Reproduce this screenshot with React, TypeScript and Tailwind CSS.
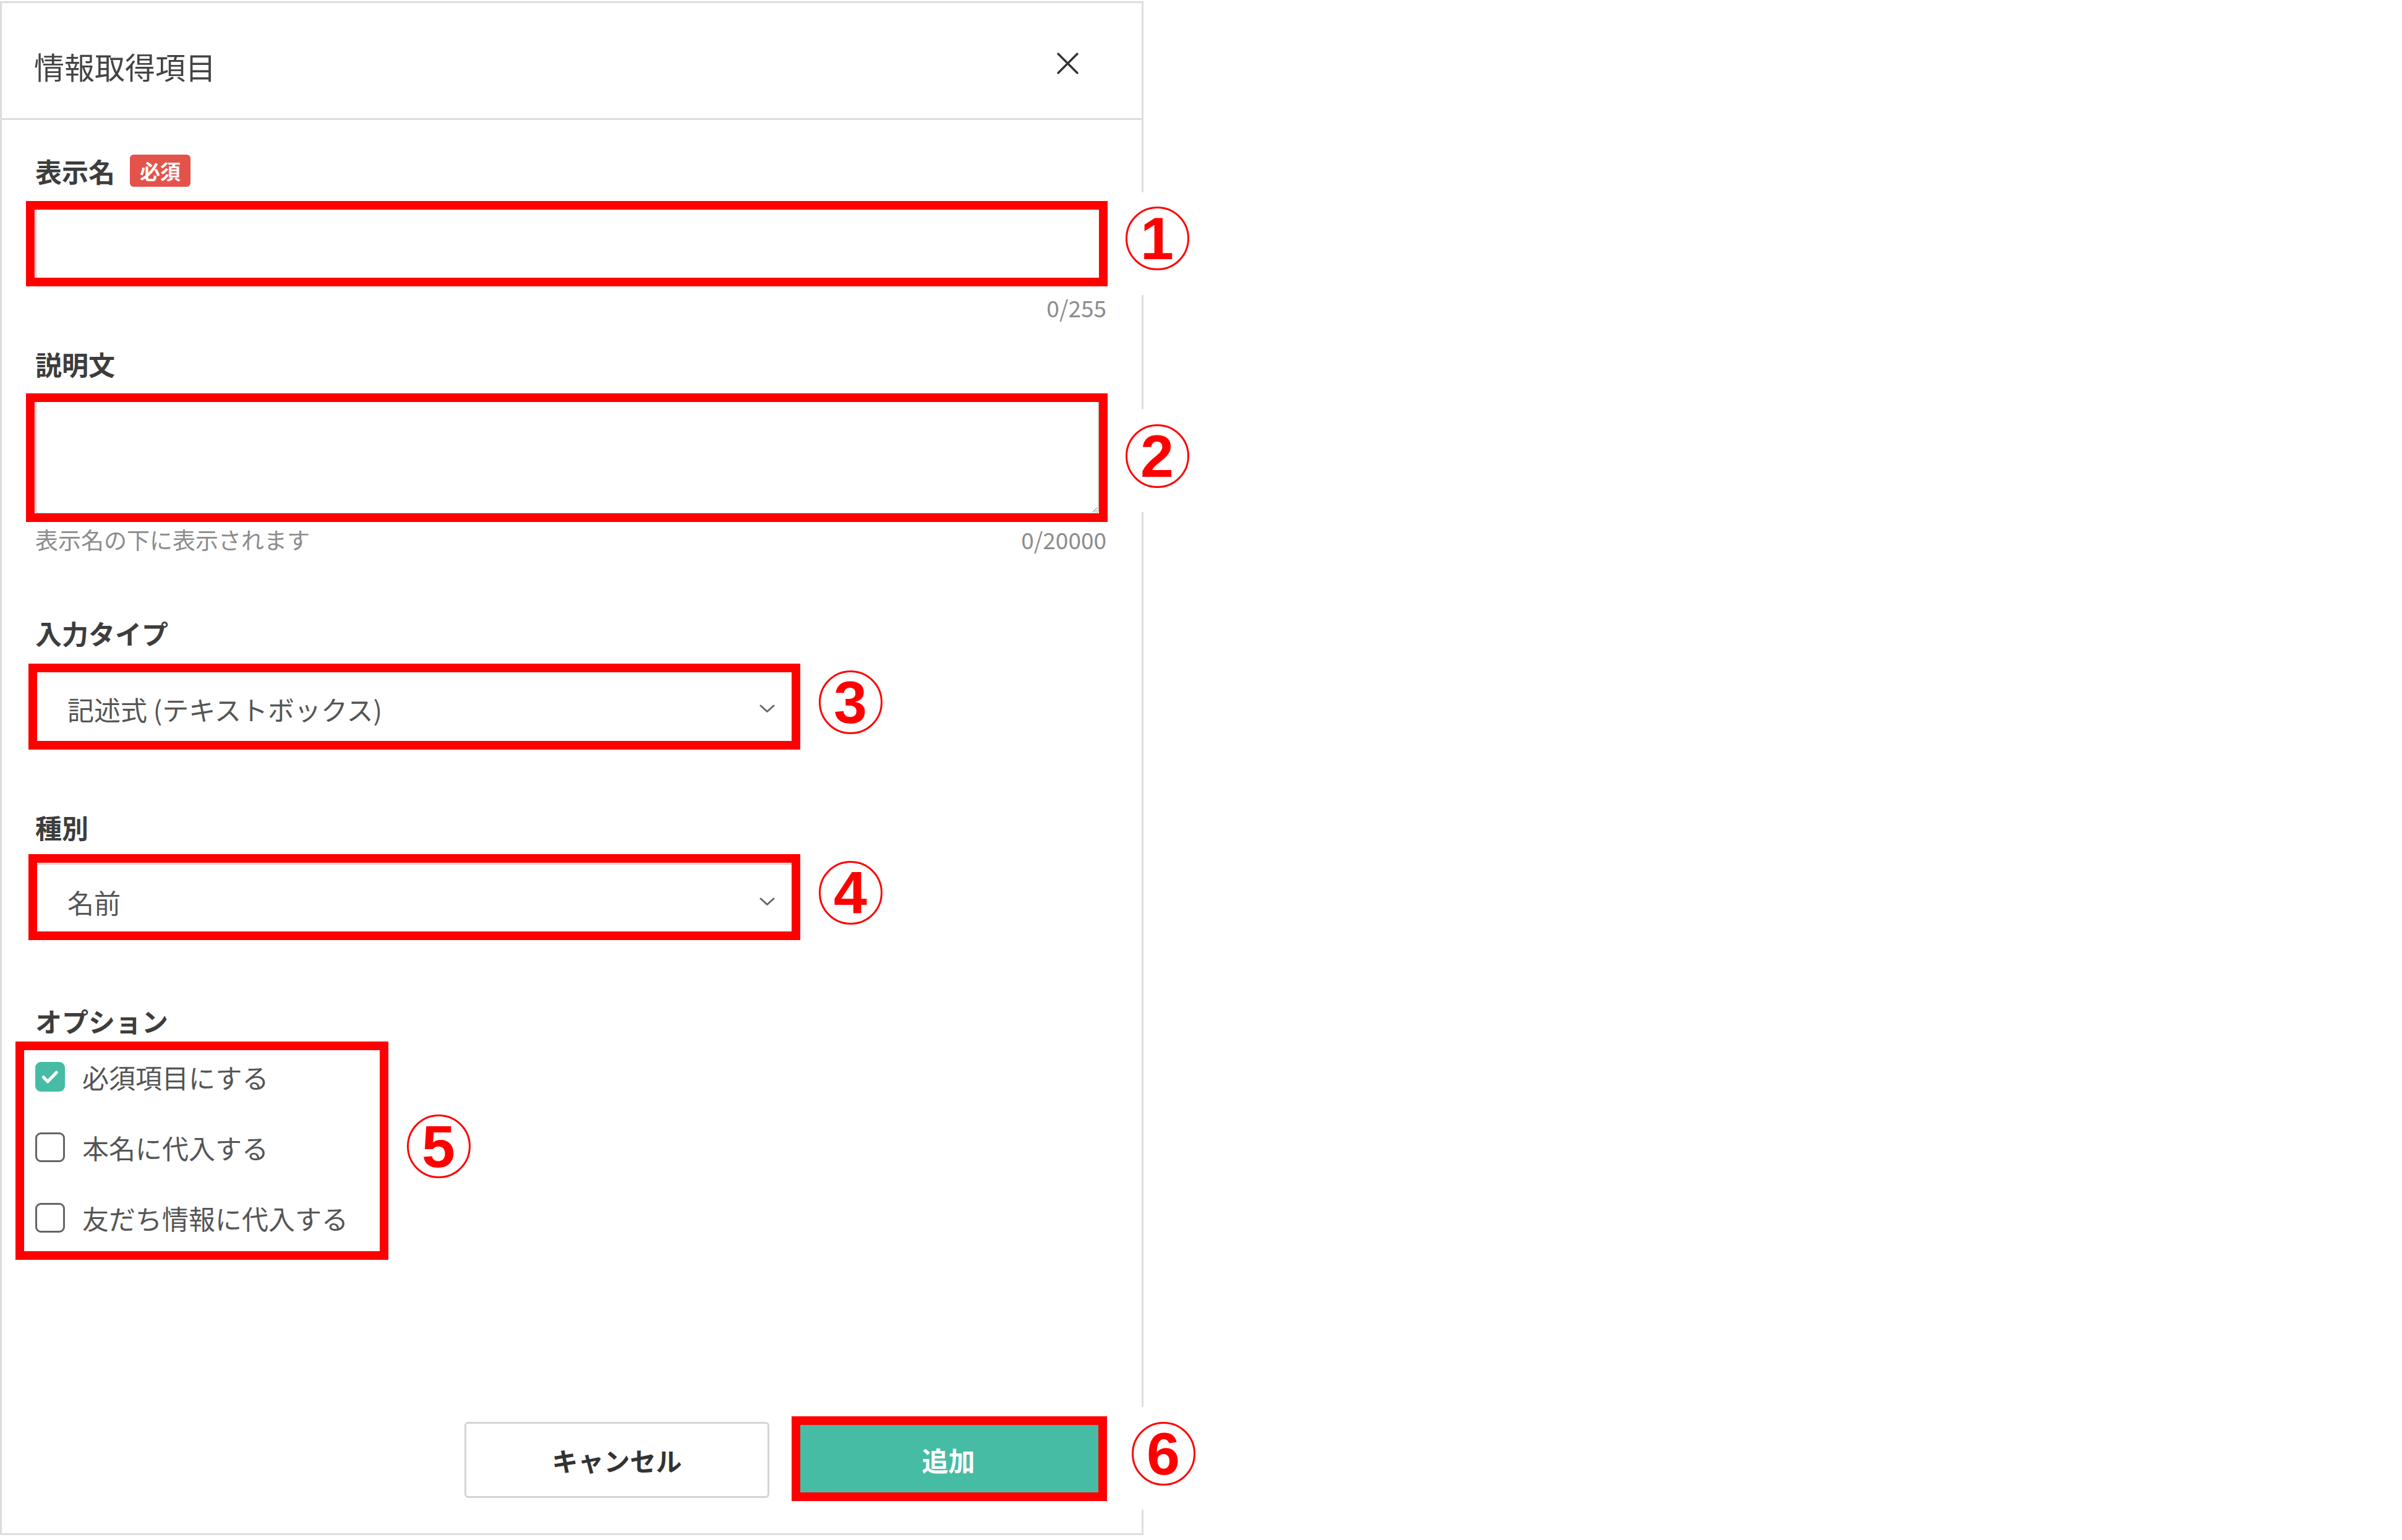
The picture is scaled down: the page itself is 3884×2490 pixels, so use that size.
import React from "react";

function Frame({ className }: { className: string }) {
  return (
    <div
      className={
        "pointer-events-none absolute border-[14px] border-[#ff0000] " + className
      }
    />
  );
}

interface MarkerProps {
  n: string;
  className: string;
  circle: string;
}

// circled step number, sits on a white patch that hides the panel edge
function Marker({ n, className, circle }: MarkerProps) {
  return (
    <div
      className={
        "pointer-events-none absolute flex h-[166px] w-[142px] items-center justify-center bg-white " +
        className
      }
    >
      <div
        className={
          "flex h-[103px] w-[103px] items-center justify-center rounded-full border-[3px] border-[#ff0000] " +
          circle
        }
      >
        <span className="font-['Liberation_Sans',sans-serif] text-[97px] font-bold leading-none text-[#ff0000]">
          {n}
        </span>
      </div>
    </div>
  );
}

function Chevron() {
  return (
    <svg width="25" height="14" viewBox="0 0 25 14" fill="none">
      <polyline
        points="2,2 12.5,11.5 23,2"
        stroke="#666"
        strokeWidth="3"
        strokeLinecap="round"
        strokeLinejoin="round"
      />
    </svg>
  );
}

function Label({ children }: { children: React.ReactNode }) {
  return (
    <span className="text-[43px] font-bold leading-[60px] text-[#3d3d3d]">{children}</span>
  );
}

function Check({ checked, label }: { checked?: boolean; label: string }) {
  return (
    <div className="flex h-[60px] items-center">
      {checked ? (
        <span className="flex h-[48px] w-[48px] items-center justify-center rounded-[9px] bg-[#46bca4]">
          <svg width="34" height="34" viewBox="0 0 24 24" fill="none">
            <path
              d="M4.5 12.5l4.8 5 10-10.5"
              stroke="#fff"
              strokeWidth="3.6"
              strokeLinecap="round"
              strokeLinejoin="round"
            />
          </svg>
        </span>
      ) : (
        <span className="h-[48px] w-[48px] rounded-[9px] border-[3px] border-[#646464] bg-white" />
      )}
      <span className="ml-[28px] text-[43px] leading-[60px] text-[#555]">{label}</span>
    </div>
  );
}

export default function App() {
  return (
    <div className="min-h-screen w-full bg-white font-['Noto_Sans_CJK_JP','Noto_Sans',sans-serif]">
      <div className="relative mt-[2px] flex h-[2480px] w-[1849px] flex-col border-[3px] border-[#dddddd] bg-white">
        <header className="flex h-[189px] shrink-0 items-center justify-between border-b-[3px] border-[#dddddd] pl-[52px] pr-[101px]">
          <h1 className="mt-[18px] text-[49px] leading-[60px] text-[#444]">情報取得項目</h1>
          <button className="mt-[8px]">
            <svg width="37" height="37" viewBox="0 0 37 37" fill="none">
              <path d="M3 3l31 31M34 3L3 34" stroke="#333" strokeWidth="3.5" strokeLinecap="round" />
            </svg>
          </button>
        </header>

        <div className="flex flex-1 flex-col pb-[57px] pl-[54px] pr-[57px]">
          {/* 表示名 */}
          <div className="mt-[52px] flex h-[60px] items-center">
            <Label>表示名</Label>
            <span className="ml-[24px] flex h-[52px] items-center rounded-[6px] bg-[#e4534b] px-[16px] text-[33px] font-bold leading-none text-white">
              必須
            </span>
          </div>
          <div className="relative mt-[26px]">
            <input className="block h-[125px] w-full rounded-[6px] border-2 border-[#d0d0d0] px-[24px] text-[42px] outline-none" />
            <Frame className="-bottom-[6px] -left-[15px] -right-[2px] -top-[7px]" />
            <Marker n="1" className="-top-[21px] left-[calc(100%+11px)]" circle="mb-[18px]" />
          </div>
          <div className="mt-[15px] text-right text-[37px] leading-[50px] text-[#8c8c8c]">0/255</div>

          {/* 説明文 */}
          <div className="mt-[36px] flex h-[60px] items-center">
            <Label>説明文</Label>
          </div>
          <div className="relative mt-[25px]">
            <textarea className="block h-[188px] w-[calc(100%-12px)] resize rounded-[6px] border-2 border-[#d0d0d0] px-[24px] py-[16px] text-[42px] outline-none" />
            <Frame className="-bottom-[13px] -left-[15px] -right-[2px] -top-[7px]" />
            <Marker n="2" className="left-[calc(100%+11px)] top-[19px]" circle="mb-[16px]" />
          </div>
          <div className="mt-[16px] flex justify-between text-[37px] leading-[50px] text-[#8c8c8c]">
            <span>表示名の下に表示されます</span>
            <span>0/20000</span>
          </div>

          {/* 入力タイプ */}
          <div className="mt-[96px] flex h-[60px] items-center">
            <Label>入力タイプ</Label>
          </div>
          <div className="relative mt-[31px] w-[1228px]">
            <div className="flex h-[124px] items-center justify-between rounded-[6px] border-2 border-[#d0d0d0] pl-[50px] pr-[30px]">
              <span className="text-[43px] leading-[60px] text-[#555]">記述式 (テキストボックス)</span>
              <Chevron />
            </div>
            <Frame className="-bottom-[4px] -left-[11px] -right-[9px] -top-[11px]" />
            <Marker n="3" className="-top-[24px] left-[calc(100%+19px)]" circle="mb-[16px]" />
          </div>

          {/* 種別 */}
          <div className="mt-[99px] flex h-[60px] items-center">
            <Label>種別</Label>
          </div>
          <div className="relative mt-[29px] w-[1228px]">
            <div className="flex h-[124px] items-center justify-between rounded-[6px] border-2 border-[#d0d0d0] pl-[50px] pr-[30px]">
              <span className="text-[43px] leading-[60px] text-[#555]">名前</span>
              <Chevron />
            </div>
            <Frame className="-left-[11px] -right-[9px] -top-[15px] bottom-0" />
            <Marker n="4" className="-top-[28px] left-[calc(100%+19px)]" circle="mb-[16px]" />
          </div>

          {/* オプション */}
          <div className="mt-[100px] flex h-[60px] items-center">
            <Label>オプション</Label>
          </div>
          <div className="relative mt-[31px] flex w-[560px] flex-col gap-[54px]">
            <Check checked label="必須項目にする" />
            <Check label="本名に代入する" />
            <Check label="友だち情報に代入する" />
            <Frame className="-bottom-[38px] -left-[32px] -right-[11px] -top-[27px]" />
            <Marker n="5" className="left-[calc(100%+21px)] top-[67px]" circle="mb-[16px]" />
          </div>

          {/* footer */}
          <div className="mt-auto flex justify-end gap-[43px] pr-[9px]">
            <button className="h-[123px] w-[493px] rounded-[6px] border-[3px] border-[#d4d4d4] bg-white text-[42px] font-bold text-[#333]">
              キャンセル
            </button>
            <div className="relative">
              <button className="h-[123px] w-[493px] bg-[#46bca4] text-[43px] font-bold text-white">
                追加
              </button>
              <Frame className="-bottom-[5px] -left-[7px] -right-[10px] -top-[9px]" />
              <Marker n="6" className="-top-[24px] left-[calc(100%+30px)]" circle="mb-[15px]" />
            </div>
          </div>
        </div>
      </div>
    </div>
  );
}
